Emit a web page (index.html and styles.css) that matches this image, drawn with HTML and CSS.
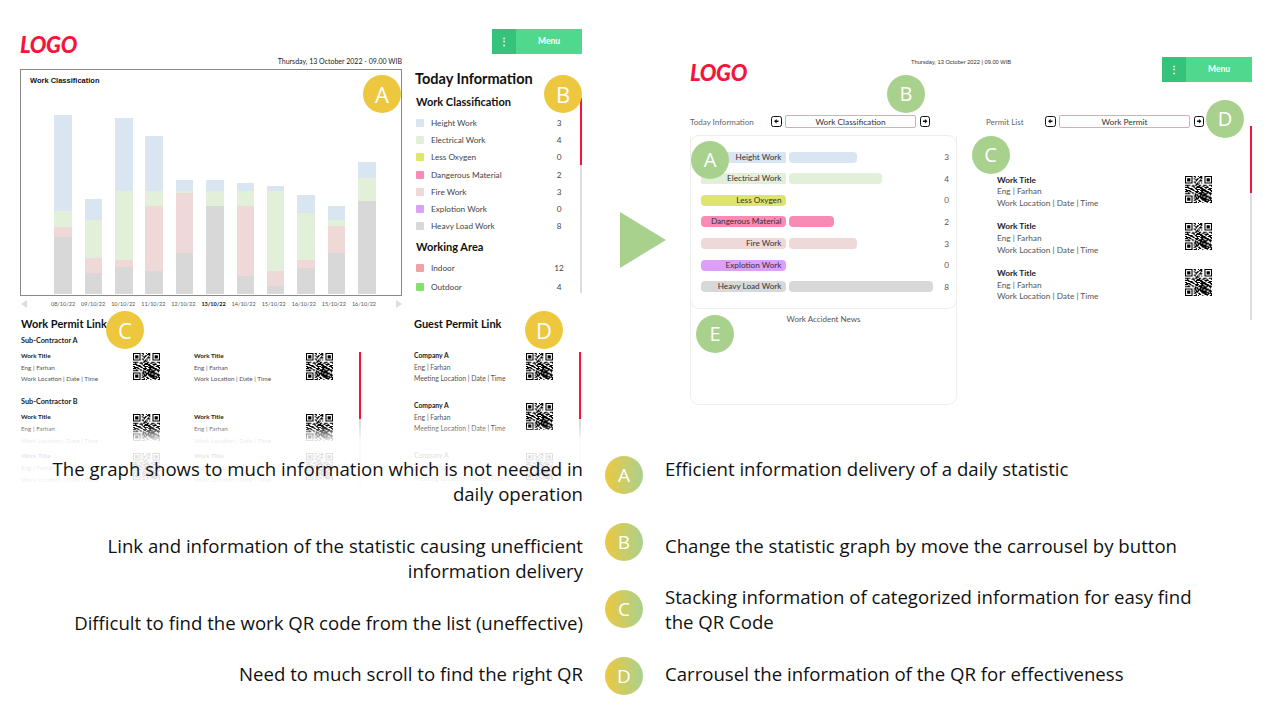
FILE: index.html
```html
<!DOCTYPE html>
<html lang="en">
<head>
  <meta charset="UTF-8" />
  <title>Dashboard Redesign</title>
  <link rel="stylesheet" href="styles.css">
</head>
<body>
  <svg class="defs" width="0" height="0">
    <symbol id="qr" viewBox="0 0 25 25">
      <path fill-rule="evenodd" d="M0 0h7v7h-7zM1 1v5h5v-5zM2 2h3v3h-3zM18 0h7v7h-7zM19 1v5h5v-5zM20 2h3v3h-3zM0 18h7v7h-7zM1 19v5h5v-5zM2 20h3v3h-3z"/>
      <path d="M8 0h2v1h-2zM12 0h1v1h-1zM14 0h2v1h-2zM9 1h1v1h-1zM13 1h3v1h-3zM8 2h1v1h-1zM11 2h2v1h-2zM15 2h1v1h-1zM9 3h3v1h-3zM14 3h1v1h-1zM10 4h1v1h-1zM13 4h3v1h-3zM8 5h2v1h-2zM12 5h1v1h-1zM9 6h1v1h-1zM11 6h1v1h-1zM13 6h1v1h-1zM15 6h1v1h-1zM10 7h3v1h-3zM0 8h5v1h-5zM7 8h1v1h-1zM9 8h2v1h-2zM13 8h2v1h-2zM17 8h3v1h-3zM22 8h3v1h-3zM2 9h1v1h-1zM6 9h3v1h-3zM11 9h3v1h-3zM16 9h2v1h-2zM20 9h1v1h-1zM24 9h1v1h-1zM0 10h4v1h-4zM8 10h1v1h-1zM10 10h6v1h-6zM18 10h4v1h-4zM3 11h4v1h-4zM9 11h2v1h-2zM14 11h3v1h-3zM19 11h1v1h-1zM22 11h3v1h-3zM0 12h2v1h-2zM5 12h3v1h-3zM10 12h4v1h-4zM15 12h4v1h-4zM21 12h3v1h-3zM1 13h4v1h-4zM7 13h2v1h-2zM11 13h1v1h-1zM14 13h6v1h-6zM23 13h2v1h-2zM0 14h3v1h-3zM4 14h2v1h-2zM9 14h4v1h-4zM15 14h2v1h-2zM18 14h4v1h-4zM24 14h1v1h-1zM3 15h1v1h-1zM6 15h2v1h-2zM10 15h2v1h-2zM13 15h5v1h-5zM20 15h4v1h-4zM0 16h5v1h-5zM7 16h1v1h-1zM9 16h1v1h-1zM12 16h4v1h-4zM17 16h4v1h-4zM22 16h3v1h-3zM9 17h3v1h-3zM14 17h6v1h-6zM23 17h1v1h-1zM8 18h2v1h-2zM11 18h4v1h-4zM16 18h6v1h-6zM9 19h2v1h-2zM12 19h5v1h-5zM19 19h5v1h-5zM8 20h1v1h-1zM10 20h3v1h-3zM14 20h6v1h-6zM22 20h3v1h-3zM9 21h3v1h-3zM15 21h7v1h-7zM23 21h1v1h-1zM8 22h2v1h-2zM12 22h2v1h-2zM16 22h4v1h-4zM21 22h4v1h-4zM10 23h1v1h-1zM13 23h2v1h-2zM18 23h4v1h-4zM24 23h1v1h-1zM8 24h3v1h-3zM12 24h1v1h-1zM16 24h1v1h-1zM20 24h1v1h-1zM23 24h2v1h-2z"/>
    </symbol>
    <symbol id="arrow-left" viewBox="0 0 10 10">
      <path d="M2.4 5 5.4 2.4v1.7h2.2v1.8H5.4v1.7z"/>
    </symbol>
    <symbol id="arrow-right" viewBox="0 0 10 10">
      <path d="M7.6 5 4.6 2.4v1.7H2.4v1.8h2.2v1.7z"/>
    </symbol>
  </svg>

  <div class="slide">
    <div class="top">

      <!-- current dashboard -->
      <section class="old">
        <header class="head">
          <div class="logo">LOGO</div>
          <div class="menu"><span class="menu-dots">⋮</span><span class="menu-label">Menu</span></div>
        </header>
        <div class="old-date">Thursday, 13 October 2022 - 09.00 WIB</div>

        <div class="old-main">
          <div class="chart-wrap">
            <div class="chart">
              <div class="chart-title">Work Classification</div>
              <div class="plot">
                <div class="bar"><i class="c-blue" style="height:96px"></i><i class="c-green" style="height:15.7px"></i><i class="c-pink" style="height:10px"></i><i class="c-gray" style="height:57.3px"></i></div>
                <div class="bar"><i class="c-blue" style="height:20.7px"></i><i class="c-green" style="height:37.7px"></i><i class="c-pink" style="height:15.7px"></i><i class="c-gray" style="height:20.7px"></i></div>
                <div class="bar"><i class="c-blue" style="height:72.7px"></i><i class="c-green" style="height:69px"></i><i class="c-pink" style="height:6.7px"></i><i class="c-gray" style="height:27.3px"></i></div>
                <div class="bar"><i class="c-blue" style="height:55.3px"></i><i class="c-green" style="height:15px"></i><i class="c-pink" style="height:65px"></i><i class="c-gray" style="height:23px"></i></div>
                <div class="bar"><i class="c-blue" style="height:11px"></i><i class="c-green" style="height:2px"></i><i class="c-pink" style="height:59.7px"></i><i class="c-gray" style="height:41.3px"></i></div>
                <div class="bar"><i class="c-blue" style="height:11px"></i><i class="c-green" style="height:15px"></i><i class="c-gray" style="height:88px"></i></div>
                <div class="bar"><i class="c-blue" style="height:8.3px"></i><i class="c-green" style="height:15px"></i><i class="c-pink" style="height:69.7px"></i><i class="c-gray" style="height:18.3px"></i></div>
                <div class="bar"><i class="c-blue" style="height:5px"></i><i class="c-green" style="height:80px"></i><i class="c-pink" style="height:15px"></i><i class="c-gray" style="height:8px"></i></div>
                <div class="bar"><i class="c-blue" style="height:18px"></i><i class="c-green" style="height:47px"></i><i class="c-pink" style="height:7.7px"></i><i class="c-gray" style="height:26.3px"></i></div>
                <div class="bar"><i class="c-blue" style="height:14px"></i><i class="c-green" style="height:6.3px"></i><i class="c-pink" style="height:26.3px"></i><i class="c-gray" style="height:41.3px"></i></div>
                <div class="bar"><i class="c-blue" style="height:15.7px"></i><i class="c-green" style="height:23.3px"></i><i class="c-gray" style="height:93px"></i></div>
              </div>
            </div>
            <div class="axis">
              <span class="tri tri-left"></span>
              <div class="axis-dates">
                <span>08/10/22</span><span>09/10/22</span><span>10/10/22</span><span>11/10/22</span><span>12/10/22</span><span class="today">13/10/22</span><span>14/10/22</span><span>15/10/22</span><span>16/10/22</span><span>15/10/22</span><span>16/10/22</span>
              </div>
              <span class="tri tri-right"></span>
            </div>
          </div>

          <aside class="legend">
            <div class="legend-body">
              <h2 class="legend-title">Today Information</h2>
              <h3 class="legend-sub">Work Classification</h3>
              <ul class="legend-list">
                <li><span class="swatch c-blue"></span><span class="legend-name">Height Work</span><span class="legend-num">3</span></li>
                <li><span class="swatch c-green"></span><span class="legend-name">Electrical Work</span><span class="legend-num">4</span></li>
                <li><span class="swatch c-lime"></span><span class="legend-name">Less Oxygen</span><span class="legend-num">0</span></li>
                <li><span class="swatch c-rose"></span><span class="legend-name">Dangerous Material</span><span class="legend-num">2</span></li>
                <li><span class="swatch c-pink"></span><span class="legend-name">Fire Work</span><span class="legend-num">3</span></li>
                <li><span class="swatch c-purple"></span><span class="legend-name">Explotion Work</span><span class="legend-num">0</span></li>
                <li><span class="swatch c-gray"></span><span class="legend-name">Heavy Load Work</span><span class="legend-num">8</span></li>
              </ul>
              <h3 class="legend-sub legend-sub-area">Working Area</h3>
              <ul class="legend-list legend-list-area">
                <li><span class="swatch c-indoor"></span><span class="legend-name">Indoor</span><span class="legend-num">12</span></li>
                <li><span class="swatch c-outdoor"></span><span class="legend-name">Outdoor</span><span class="legend-num">4</span></li>
              </ul>
            </div>
            <div class="scroll scroll-legend"><div class="thumb"></div></div>
          </aside>
        </div>

        <div class="links">
          <div class="links-work">
            <div class="links-body">
              <h3 class="links-title">Work Permit Link</h3>
              <div class="sub">Sub-Contractor A</div>
              <div class="permit-row">
                <div class="permit"><div><b>Work Title</b><br>Eng | Farhan<br>Work Location | Date | Time</div><svg class="qr"><use href="#qr"/></svg></div>
                <div class="permit"><div><b>Work Title</b><br>Eng | Farhan<br>Work Location | Date | Time</div><svg class="qr"><use href="#qr"/></svg></div>
              </div>
              <div class="sub sub-next">Sub-Contractor B</div>
              <div class="permit-row">
                <div class="permit"><div><b>Work Title</b><br>Eng | Farhan<br>Work Location | Date | Time</div><svg class="qr"><use href="#qr"/></svg></div>
                <div class="permit"><div><b>Work Title</b><br>Eng | Farhan<br>Work Location | Date | Time</div><svg class="qr"><use href="#qr"/></svg></div>
              </div>
              <div class="permit-row permit-row-last">
                <div class="permit"><div><b>Work Title</b><br>Eng | Farhan<br>Work Location | Date | Time</div><svg class="qr"><use href="#qr"/></svg></div>
                <div class="permit"><div><b>Work Title</b><br>Eng | Farhan<br>Work Location | Date | Time</div><svg class="qr"><use href="#qr"/></svg></div>
              </div>
            </div>
            <div class="scroll scroll-links"><div class="thumb"></div></div>
          </div>
          <div class="links-guest">
            <div class="links-body">
              <h3 class="links-title">Guest Permit Link</h3>
              <div class="guest-list">
                <div class="permit permit-guest"><div><b>Company A</b><br>Eng | Farhan<br>Meeting Location | Date | Time</div><svg class="qr"><use href="#qr"/></svg></div>
                <div class="permit permit-guest"><div><b>Company A</b><br>Eng | Farhan<br>Meeting Location | Date | Time</div><svg class="qr"><use href="#qr"/></svg></div>
                <div class="permit permit-guest"><div><b>Company A</b><br>Eng | Farhan<br>Meeting Location | Date | Time</div><svg class="qr"><use href="#qr"/></svg></div>
              </div>
            </div>
            <div class="scroll scroll-links"><div class="thumb"></div></div>
          </div>
        </div>
        <div class="fade"></div>
      </section>

      <svg class="big-arrow" width="46" height="56" viewBox="0 0 46 56"><polygon points="0,0 46,28 0,56" fill="#a9d18e"/></svg>

      <!-- proposed dashboard -->
      <section class="new">
        <header class="head">
          <div class="logo">LOGO</div>
          <div class="new-date">Thursday, 13 October 2022 | 09.00 WIB</div>
          <div class="menu"><span class="menu-dots">⋮</span><span class="menu-label">Menu</span></div>
        </header>

        <div class="new-main">
          <div class="new-left">
            <div class="picker">
              <span class="picker-label picker-label-info">Today Information</span>
              <svg class="step"><use href="#arrow-left"/></svg>
              <span class="pill">Work Classification</span>
              <svg class="step"><use href="#arrow-right"/></svg>
            </div>
            <div class="panel">
              <div class="stats">
                <div class="stat"><span class="tag tag-square c-blue">Height Work</span><span class="fill c-blue" style="width:68px"></span><span class="stat-num">3</span></div>
                <div class="stat"><span class="tag tag-square c-green">Electrical Work</span><span class="fill c-green" style="width:93px"></span><span class="stat-num">4</span></div>
                <div class="stat"><span class="tag c-lime">Less Oxygen</span><span class="stat-num">0</span></div>
                <div class="stat"><span class="tag c-rose">Dangerous Material</span><span class="fill c-rose" style="width:45px"></span><span class="stat-num">2</span></div>
                <div class="stat"><span class="tag c-pink">Fire Work</span><span class="fill c-pink" style="width:68px"></span><span class="stat-num">3</span></div>
                <div class="stat"><span class="tag c-purple">Explotion Work</span><span class="stat-num">0</span></div>
                <div class="stat"><span class="tag c-gray">Heavy Load Work</span><span class="fill c-gray" style="width:144px"></span><span class="stat-num">8</span></div>
              </div>
              <div class="news">Work Accident News</div>
            </div>
          </div>

          <div class="new-right">
            <div class="picker">
              <span class="picker-label picker-label-permit">Permit List</span>
              <svg class="step"><use href="#arrow-left"/></svg>
              <span class="pill">Work Permit</span>
              <svg class="step"><use href="#arrow-right"/></svg>
            </div>
            <div class="permit-wrap">
              <div class="permit-list">
                <div class="permit permit-big"><div><b>Work Title</b><br>Eng | Farhan<br>Work Location | Date | Time</div><svg class="qr"><use href="#qr"/></svg></div>
                <div class="permit permit-big"><div><b>Work Title</b><br>Eng | Farhan<br>Work Location | Date | Time</div><svg class="qr"><use href="#qr"/></svg></div>
                <div class="permit permit-big"><div><b>Work Title</b><br>Eng | Farhan<br>Work Location | Date | Time</div><svg class="qr"><use href="#qr"/></svg></div>
              </div>
              <div class="scroll scroll-permit"><div class="thumb"></div></div>
            </div>
          </div>
        </div>
      </section>
    </div>

    <!-- comparison notes -->
    <div class="notes">
      <p class="note-left">The graph shows to much information which is not needed in daily operation</p>
      <div class="dot dot-a">A</div>
      <p class="note-right">Efficient information delivery of a daily statistic</p>

      <p class="note-left">Link and information of the statistic causing unefficient information delivery</p>
      <div class="dot dot-b">B</div>
      <p class="note-right">Change the statistic graph by move the carrousel by button</p>

      <p class="note-left note-left-low">Difficult to find the work QR code from the list (uneffective)</p>
      <div class="dot dot-c">C</div>
      <p class="note-right">Stacking information of categorized information for easy find the QR Code</p>

      <p class="note-left">Need to much scroll to find the right QR</p>
      <div class="dot dot-d">D</div>
      <p class="note-right">Carrousel the information of the QR for effectiveness</p>
    </div>

    <span class="badge yellow old-a">A</span>
    <span class="badge yellow old-b">B</span>
    <span class="badge yellow old-c">C</span>
    <span class="badge yellow old-d">D</span>
    <span class="badge green new-a">A</span>
    <span class="badge green new-b">B</span>
    <span class="badge green new-c">C</span>
    <span class="badge green new-d">D</span>
    <span class="badge green new-e">E</span>
  </div>
</body>
</html>
```

FILE: styles.css
```css
* {
  box-sizing: border-box;
}
body {
  margin: 0;
  background-color: white;
  font-family: Lato, sans-serif;
  color: #333;
}
h2, h3, p, ul {
  margin: 0;
  padding: 0;
}
ul {
  list-style: none;
}
.defs {
  position: absolute;
}
.slide {
  position: relative;
  width: 1280px;
  height: 720px;
  overflow: hidden;
}
.top {
  display: flex;
  height: 456px;
}

/* shared colours */
.c-blue { background-color: #d9e5f1; }
.c-green { background-color: #e2efd9; }
.c-lime { background-color: #dde66b; }
.c-rose { background-color: #f78bb5; }
.c-pink { background-color: #efd8d8; }
.c-purple { background-color: #dd9ff7; }
.c-gray { background-color: #d8d8d8; }
.c-indoor { background-color: #f0a3a3; }
.c-outdoor { background-color: #86e06f; }

/* header */
.head {
  display: flex;
  justify-content: space-between;
  height: 25px;
}
.logo {
  margin-top: 3px;
  font-size: 22px;
  font-weight: 900;
  font-style: italic;
  line-height: 26px;
  letter-spacing: -0.3px;
  color: #f5143c;
}
.menu {
  display: flex;
  width: 90px;
  height: 25px;
  background-color: #50d98e;
  color: white;
}
.menu-dots {
  width: 24px;
  background-color: #35c27a;
  font-size: 10px;
  font-weight: 700;
  line-height: 24px;
  text-align: center;
}
.menu-label {
  flex: 1;
  font-size: 8.5px;
  font-weight: 700;
  line-height: 25px;
  text-align: center;
}

/* old dashboard */
.old {
  position: relative;
  width: 562px;
  margin-left: 20px;
  padding-top: 29px;
}
.old-date {
  width: 382px;
  margin-top: 1.5px;
  font-size: 7px;
  line-height: 10px;
  text-align: right;
  color: #222;
}
.old-main {
  display: flex;
  margin-top: 3.5px;
}
.chart-wrap {
  width: 382px;
}
.chart {
  display: flex;
  flex-direction: column;
  height: 227px;
  border: 1px solid #8a8a8a;
}
.chart-title {
  padding: 6px 0 0 9px;
  font-family: "Liberation Sans", sans-serif;
  font-size: 7.5px;
  font-weight: 700;
  line-height: 10px;
  color: #111;
}
.plot {
  flex: 1;
  display: grid;
  grid-template-columns: repeat(11, 30.4px);
  justify-items: center;
  align-items: end;
  margin-left: 26.8px;
  padding-bottom: 1px;
}
.bar {
  display: flex;
  flex-direction: column;
  width: 17.5px;
}
.axis {
  display: flex;
  align-items: center;
  height: 15px;
}
.axis-dates {
  flex: 1;
  display: grid;
  grid-template-columns: repeat(11, 30.1px);
  justify-items: center;
  margin-left: 21px;
  font-size: 5.5px;
  color: #555;
}
.today {
  font-weight: 700;
  color: #111;
}
.tri {
  width: 0;
  height: 0;
  border-top: 4px solid transparent;
  border-bottom: 4px solid transparent;
}
.tri-left {
  margin-left: 1px;
  border-right: 6px solid #ddd;
}
.tri-right {
  border-left: 6px solid #ddd;
}
.legend {
  display: flex;
  width: 167px;
  margin-left: 13px;
}
.legend-body {
  flex: 1;
}
.legend-title {
  font-size: 14.5px;
  font-weight: 700;
  line-height: 19px;
  color: #111;
}
.legend-sub {
  margin: 6px 0 0 1px;
  font-size: 11px;
  font-weight: 700;
  line-height: 16px;
  color: #111;
}
.legend-sub-area {
  margin-top: 4px;
}
.legend-list {
  margin: 4.4px 0 0 1px;
  font-size: 8.2px;
  color: #444;
}
.legend-list li {
  display: flex;
  align-items: center;
  height: 17.2px;
}
.legend-list-area {
  margin-top: 3.5px;
}
.legend-list-area li {
  height: 19px;
}
.swatch {
  width: 8px;
  height: 8px;
  border-radius: 1px;
}
.legend-name {
  width: 118px;
  margin-left: 7px;
}
.legend-num {
  width: 20px;
  text-align: center;
}

/* scrollbars */
.scroll {
  flex: none;
  width: 2px;
  background-color: #ddd;
}
.thumb {
  background-color: #f5143c;
}
.scroll-legend {
  height: 195px;
  margin-top: 29px;
}
.scroll-legend .thumb {
  height: 67px;
}
.scroll-links {
  height: 134px;
  margin-top: 36px;
}
.scroll-links .thumb {
  height: 67px;
}
.scroll-permit {
  height: 194px;
  margin-top: -2px;
}
.scroll-permit .thumb {
  height: 67px;
}

/* link lists */
.links {
  display: flex;
  margin-top: 5px;
}
.links-work, .links-guest {
  display: flex;
}
.links-work {
  width: 341px;
}
.links-guest {
  width: 168px;
  margin-left: 52px;
}
.links-body {
  flex: 1;
  min-width: 0;
}
.links-title {
  padding-left: 1px;
  font-size: 11px;
  font-weight: 700;
  line-height: 16px;
  color: #111;
}
.sub {
  margin-top: 3px;
  padding-left: 1px;
  font-size: 7.3px;
  font-weight: 700;
  line-height: 12px;
  color: #222;
}
.sub-next {
  margin-top: 11px;
}
.permit-row {
  display: flex;
  margin-top: 3px;
  padding-left: 1px;
}
.permit-row-last {
  margin-top: 4px;
}
.permit {
  display: flex;
  flex: none;
  justify-content: space-between;
  width: 139px;
  margin-right: 34px;
  font-size: 6.3px;
  line-height: 11.7px;
  color: #555;
}
.permit b {
  color: #222;
}
.qr {
  flex: none;
  width: 27px;
  height: 27px;
  margin-top: 3px;
}
.guest-list {
  margin-top: 18px;
}
.permit-guest {
  width: 140px;
  height: 50px;
  margin-right: 0;
  padding-left: 1px;
  font-size: 6.8px;
}
.fade {
  position: absolute;
  left: 0;
  right: -5px;
  top: 420px;
  height: 70px;
  background: linear-gradient(to bottom, rgba(255,255,255,0) 5px, rgba(255,255,255,0.88) 20px, rgba(255,255,255,0.88) 58px, white 70px);
}

/* arrow between the two */
.big-arrow {
  flex: none;
  margin: 212px 0 0 38px;
}

/* new dashboard */
.new {
  width: 562px;
  margin-left: 24px;
  padding-top: 57px;
}
.new .logo {
  margin-top: 3px;
}
.new-date {
  margin: 0 0 0 164px;
  font-family: "Liberation Sans", sans-serif;
  font-size: 5.7px;
  line-height: 10px;
  color: #333;
}
.new .menu {
  margin-left: auto;
}
.new-main {
  display: flex;
  margin-top: 33px;
}
.new-left {
  width: 267px;
}
.new-right {
  width: 266px;
  margin-left: 29px;
}
.picker {
  display: flex;
  align-items: center;
  gap: 3.5px;
  height: 13px;
  font-size: 8px;
}
.picker-label {
  padding-top: 1px;
  color: #666;
}
.picker-label-info {
  width: 77.5px;
}
.picker-label-permit {
  width: 55.5px;
}
.step {
  flex: none;
  width: 10.5px;
  height: 10.5px;
  border: 1.4px solid #111;
  border-radius: 2.5px;
  fill: #111;
}
.pill {
  flex: none;
  width: 131px;
  height: 13px;
  border: 1px solid #f59fb0;
  border-radius: 2px;
  font-size: 8.3px;
  line-height: 12.5px;
  text-align: center;
  color: #333;
}
.panel {
  height: 270px;
  margin-top: 6.7px;
  border: 1px solid #eee;
  border-radius: 9px;
}
.stats {
  height: 173px;
  margin: 0 -1px;
  padding: 16px 5px 0 9.5px;
  border: 1px solid #eee;
  border-top: none;
  border-radius: 0 0 9px 9px;
}
.stat {
  display: flex;
  align-items: center;
  gap: 3px;
  height: 11px;
  margin-bottom: 10.6px;
  font-size: 8.2px;
}
.tag {
  flex: none;
  width: 85px;
  height: 11px;
  padding-right: 4px;
  border-radius: 4px;
  line-height: 11px;
  text-align: right;
  color: #333;
}
.tag-square {
  border-radius: 1px;
}
.fill {
  height: 11px;
  border-radius: 4px;
}
.stat-num {
  margin-left: auto;
  width: 9px;
  color: #555;
  text-align: center;
}
.news {
  padding-top: 5px;
  font-size: 8px;
  line-height: 11px;
  text-align: center;
  color: #555;
}
.permit-wrap {
  display: flex;
  height: 192px;
}
.permit-list {
  flex: 1;
  padding: 46.7px 0 0 11px;
}
.permit-big {
  width: 215px;
  height: 46.6px;
  margin: 0;
  font-size: 8.3px;
  line-height: 11.7px;
}
.permit-big .qr {
  margin-top: 1.5px;
}
.permit-big b {
  color: #222;
}

/* badges */
.badge {
  position: absolute;
  width: 38px;
  height: 38px;
  border-radius: 50%;
  font-family: "Open Sans", sans-serif;
  line-height: 38px;
  text-align: center;
  color: white;
}
.yellow {
  background-color: #edc83f;
  font-size: 22px;
}
.green {
  background-color: #a9d18e;
  font-size: 20px;
}
.old-a { left: 363px; top: 75px; }
.old-b { left: 544px; top: 75px; }
.old-c { left: 106px; top: 311px; }
.old-d { left: 525px; top: 311px; }
.new-a { left: 691px; top: 141px; }
.new-b { left: 887px; top: 75px; }
.new-c { left: 971.5px; top: 136px; }
.new-d { left: 1206px; top: 100px; }
.new-e { left: 696px; top: 315px; }

/* notes at the bottom */
.notes {
  position: relative;
  display: grid;
  grid-template-columns: 563px 38px 535px;
  grid-template-rows: 77px 51px 77px 58px;
  column-gap: 22px;
  margin-left: 20px;
  font-family: "Open Sans", sans-serif;
  font-size: 18.6px;
  line-height: 25px;
  color: #111;
}
.note-left {
  text-align: right;
}
.note-left-low {
  margin-top: 26px;
}
.dot {
  width: 38px;
  height: 38px;
  border-radius: 50%;
  background: linear-gradient(to right, #edc83f, #a9d18e);
  font-size: 19px;
  line-height: 38px;
  text-align: center;
  color: white;
}
.dot-a { margin-top: 0; }
.dot-b { margin-top: -10px; }
.dot-c { margin-top: 6px; }
.dot-d { margin-top: -4px; }
```
